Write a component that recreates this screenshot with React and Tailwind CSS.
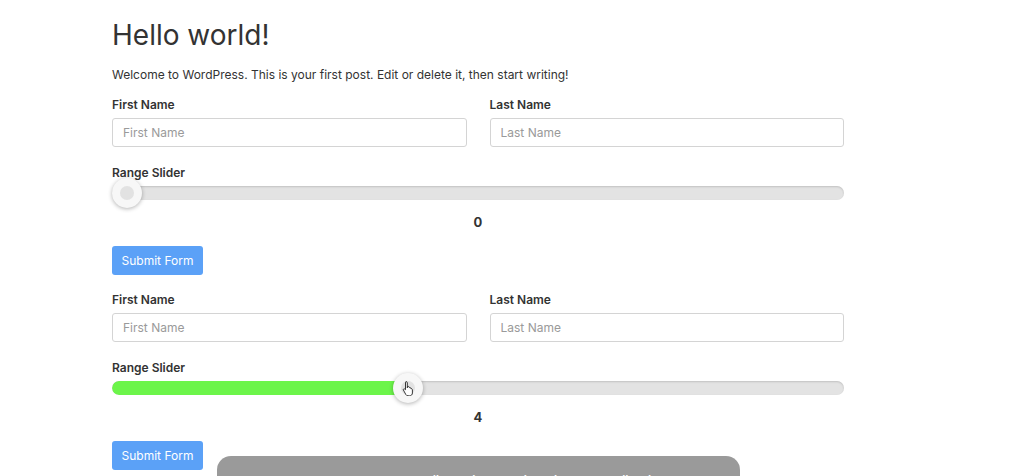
import React, { useState } from "react";

const FONT = { fontFamily: "Inter, 'Noto Sans', sans-serif" };

const Slider = ({ value, max }) => {
  const pct = value / max;
  return (
    <div className="relative -mt-[4px] h-[30px] flex items-center">
      <div className="w-full h-[14px] rounded-full bg-[#e3e3e3] shadow-[inset_0_1px_2px_rgba(0,0,0,0.15)] overflow-hidden">
        {value > 0 && (
          <div
            className="h-full rounded-full bg-[#6cf54a]"
            style={{ width: `calc(15px + (100% - 30px) * ${pct})` }}
          />
        )}
      </div>
      <div
        className="absolute top-0 w-[30px] h-[30px] rounded-full bg-[#f7f7f7] shadow-[0_1px_4px_rgba(0,0,0,0.3)] flex items-center justify-center"
        style={{ left: `calc((100% - 30px) * ${pct})` }}
      >
        <div className="w-[14px] h-[14px] rounded-full bg-[#e2e2e2]" />
        {value > 0 && (
          <svg className="absolute left-[9px] top-[7px]" width="14" height="16" viewBox="0 0 14 16">
            <path
              d="M4 1.5c.8 0 1.3.6 1.3 1.3v5l.2-1.2c.6-.4 1.5-.2 1.7.5l.1.6c.6-.4 1.5-.1 1.6.6v.5c.7-.3 1.5.1 1.5.9v3.3c0 1.6-1.2 2.8-2.8 2.8H6c-1 0-1.7-.5-2.2-1.3L1.4 10c-.4-.7.4-1.5 1.2-1l.9.7V2.8c0-.7.1-1.3.5-1.3z"
              fill="#fff"
              stroke="#222"
              strokeWidth="0.9"
              strokeLinejoin="round"
            />
          </svg>
        )}
      </div>
    </div>
  );
};

const FormBlock = ({ value }) => {
  return (
    <div className="flex flex-col">
      <div className="grid grid-cols-2 gap-x-[23px]">
        <div className="flex flex-col">
          <label className="text-[12px] font-semibold text-[#333] leading-[18px]">First Name</label>
          <input
            className="mt-[4px] h-[29px] rounded-[3px] border border-[#d4d4d4] px-[10px] text-[12px] placeholder-[#9a9a9a] outline-none"
            placeholder="First Name"
          />
        </div>
        <div className="flex flex-col">
          <label className="text-[12px] font-semibold text-[#333] leading-[18px]">Last Name</label>
          <input
            className="mt-[4px] h-[29px] rounded-[3px] border border-[#d4d4d4] px-[10px] text-[12px] placeholder-[#9a9a9a] outline-none"
            placeholder="Last Name"
          />
        </div>
      </div>
      <label className="mt-[17px] text-[12px] font-semibold text-[#333] leading-[18px]">Range Slider</label>
      <Slider value={value} max={10} />
      <div className="mt-[5px] text-center text-[13px] font-bold text-[#333] leading-[18px]">{value}</div>
      <div className="mt-[15px]">
        <button className="h-[29px] w-[91px] rounded-[3px] bg-[#5ba1f7] text-white text-[12px]">Submit Form</button>
      </div>
    </div>
  );
};

export default function App() {
  const [values] = useState([0, 4]);
  return (
    <div className="relative w-[1024px] h-[476px] bg-white overflow-hidden" style={FONT}>
      <div className="ml-[112px] w-[732px] pt-[16px] flex flex-col">
        <h1 className="text-[28px] leading-[38px] text-[#333]">Hello world!</h1>
        <p className="mt-[12px] text-[12px] leading-[18px] text-[#333]">
          Welcome to WordPress. This is your first post. Edit or delete it, then start writing!
        </p>
        <div className="mt-[12px] flex flex-col gap-[16px]">
          {values.map((v, i) => (
            <FormBlock key={i} value={v} />
          ))}
        </div>
      </div>
      <div className="absolute left-[217px] top-[456px] w-[523px] h-[40px] rounded-t-[14px] bg-[#9a9a9a] text-center text-white text-[15px] pt-[15px]">
        Ihr Browser unterstützt diese Seite nicht vollständig
      </div>
    </div>
  );
}
